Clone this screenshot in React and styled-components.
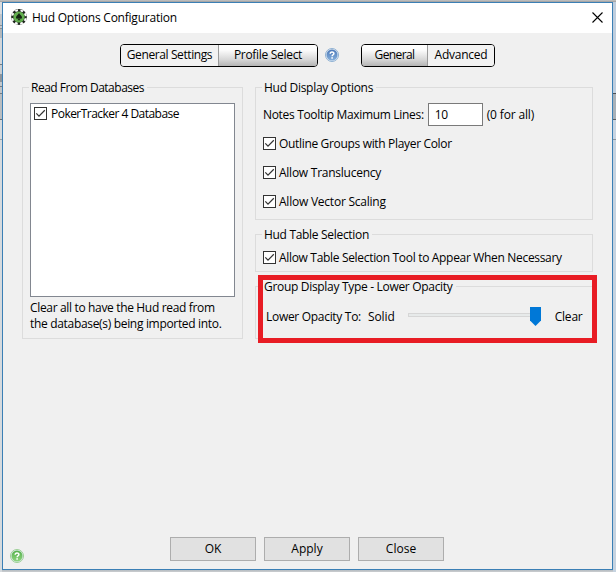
import React from 'react';
import styled, { createGlobalStyle } from 'styled-components';

const Global = createGlobalStyle`
  * { box-sizing: border-box; }
  body { margin: 0; overflow: hidden; color: #000; font: 12px/16px "Open Sans", "Noto Sans", sans-serif; }
`;

const Desktop = styled.div`
  width: 616px;
  height: 572px;
  display: grid;
  grid-template-columns: 2px 611px 3px;
  grid-template-rows: 2px 568px 2px;
  background: #c3c6c9;
`;
const Backdrop = styled.div`
  grid-row: ${p => p.$row};
  grid-column: ${p => p.$col};
  background: ${p => p.$fill};
`;
const Window = styled.div`
  grid-row: 2;
  grid-column: 2;
  display: flex;
  flex-direction: column;
  border: 1px solid #3b7fb5;
  background: #f0f0f0;
`;
const TitleBar = styled.div`
  height: 30px;
  display: flex;
  align-items: center;
  padding: 0 9px 2px 8px;
  background: #fff;
`;
const Title = styled.h1`
  flex: 1;
  margin: 2px 0 0 5px;
  font: inherit;
`;
const Label = styled.span`
  white-space: nowrap;
  letter-spacing: ${p => p.$ls || 0}px;
  margin-left: ${p => p.$gap || 0}px;
`;
const TabBar = styled.div`
  display: flex;
  align-items: center;
  height: 24px;
  margin: 10px 0 0 117px;
`;
const TabGroup = styled.div`
  display: flex;
  height: 23px;
  border: 1px solid #000;
  border-radius: 4px;
  overflow: hidden;
`;
const Tab = styled.button`
  width: ${p => p.$w}px;
  padding: 0;
  border: 0;
  border-left: ${p => (p.$divided ? '1px solid #9a9a9a' : '0')};
  font: inherit;
  color: inherit;
  background: ${p => (p.$active ? 'linear-gradient(#fff 0%, #fbfbfb 25%, #d6d6d6 70%, #b4b4b4 100%)' : '#f2f2f2')};
`;
const HelpSlot = styled.div`
  display: flex;
  margin: 0 22px 0 7px;
`;
const Columns = styled.div`
  display: flex;
  gap: 12px;
  margin: 20px 0 0 19px;
`;
const RightColumn = styled.div`
  width: 338px;
  display: flex;
  flex-direction: column;
`;
const Group = styled.section`
  width: ${p => p.$w}px;
  height: ${p => p.$h}px;
  margin-bottom: ${p => p.$after || 0}px;
  padding: 0 7px;
  border: 1px solid #dcdcdc;
`;
const Legend = styled.h2`
  width: fit-content;
  height: 16px;
  margin: -8px 0 0 -1px;
  padding: 0 3px 0 2px;
  background: #f0f0f0;
  font: inherit;
`;
const DatabaseList = styled.div`
  width: 205px;
  height: 194px;
  margin-top: 7px;
  padding: 1px 3px;
  border: 1px solid #828790;
  background: #fff;
`;
const Hint = styled.p`
  display: flex;
  flex-direction: column;
  margin: 3px 0 0;
`;
const Row = styled.div`
  display: flex;
  align-items: center;
  height: ${p => p.$h}px;
  margin-top: ${p => p.$top || 0}px;
`;
const CheckMark = styled.span`
  width: 13px;
  height: 13px;
  flex: none;
  display: flex;
  border: 1px solid #333;
  background: #fff;
`;
const NumberInput = styled.input`
  width: 55px;
  height: 23px;
  margin: 0 4px 0 4px;
  padding: 0 0 1px 6px;
  border: 1px solid #7a7a7a;
  border-radius: 0;
  background: #fff;
  font: inherit;
  color: inherit;
  letter-spacing: -0.4px;
`;
const Slider = styled.div`
  width: 133px;
  height: 19px;
  margin: 0 14px 0 13px;
  display: grid;
  align-items: center;
`;
const Track = styled.div`
  grid-area: 1 / 1;
  height: 4px;
  margin-bottom: 3px;
  border: 1px solid #d6d6d6;
  background: #e7eaea;
`;
const Thumb = styled.svg`
  grid-area: 1 / 1;
  justify-self: end;
  display: block;
`;
const HighlightHost = styled.div`
  position: relative;
`;
const Highlight = styled.div`
  position: absolute;
  left: 3px;
  top: -11px;
  width: 339px;
  height: 68px;
  border: 5px solid #e81c24;
  pointer-events: none;
`;
const Footer = styled.div`
  display: flex;
  align-items: flex-end;
  height: 26px;
  margin: auto 0 6px 7px;
`;
const Buttons = styled.div`
  display: flex;
  align-self: flex-start;
  gap: 8px;
  margin-left: 146px;
`;
const PushButton = styled.button`
  width: 86px;
  height: 24px;
  padding: 0 0 1px;
  border: 1px solid #adadad;
  background: #e1e1e1;
  font: inherit;
  color: inherit;
`;

const LEFT_FILL = `linear-gradient(#d9dcdf 0 12px, #c2c6ca 12px 23px, #8b9094 23px 24px, #c7cacd 24px 26px,
  #8b9094 26px 27px, #b4b8bb 27px 36px, #d3d6d9 36px 62px, #777c80 62px 63px, #c9cdd0 63px 72px, #8f959b 72px 80px, #c4c8cb 80px 84px,
  #777c80 84px 85px, #c0c4c8 85px 91px, #777c80 91px 92px, #b9bdc0 92px 117px, #6b6f73 117px 118px, #d5dade 118px 137px,
  #9aa0a5 137px 138px, #d5dade 138px 100%)`;
const RIGHT_FILL = `linear-gradient(#bfcede 0 91px, #4b5054 91px 92px, #a9b1b8 92px 117px, #5a5e61 117px 118px,
  #c9d5e2 118px 137px, #8b949c 137px 138px, #c6d3e0 138px 100%)`;

const ChipIcon = () => (
  <svg width="16" height="16" viewBox="0 0 16 16">
    <circle cx="8" cy="8" r="7.9" fill="#20261f" />
    <circle cx="8" cy="8" r="6.8" fill="none" stroke="#fff" strokeWidth="2" strokeDasharray="2.8 2.54" strokeDashoffset="-1.270" />
    <circle cx="8" cy="8" r="5.6" fill="#62ae4e" />
    <path d="M8 3.900C8.800 5.500 11 6.700 11 8.400c0 1.400-1.600 1.800-2.500.9.100 1 .4 1.500 1.100 1.900H6.400c.7-.4 1-.9 1.100-1.900-.9.900-2.500.5-2.500-.9C5 6.700 7.200 5.500 8 3.900z" fill="#142512" />
  </svg>
);

const CloseIcon = () => (
  <svg width="11" height="11" viewBox="0 0 11 11">
    <path d="M.5.5l10 10M10.500.5l-10 10" stroke="#000" strokeWidth="1.1" />
  </svg>
);

const HelpIcon = ({ id, dark, light, rim }) => (
  <svg width="14" height="14" viewBox="0 0 14 14">
    <defs>
      <linearGradient id={id} x1="0" y1="0" x2="0" y2="1">
        <stop offset="0" stopColor={dark} />
        <stop offset="1" stopColor={light} />
      </linearGradient>
    </defs>
    <circle cx="7" cy="7" r="6.500" fill="#e3ebf2" stroke={rim} strokeWidth="1" />
    <circle cx="7" cy="7" r="5.500" fill={`url(#${id})`} />
    <path d="M5.200 5.700C5.200 3.400 8.900 3.500 8.900 5.500 8.900 6.700 7.100 6.800 7.100 8.300" fill="none" stroke="#fff" strokeWidth="1.500" />
    <rect x="6.300" y="9.200" width="1.600" height="1.500" fill="#fff" />
  </svg>
);

const Check = () => (
  <CheckMark role="checkbox" aria-checked="true">
    <svg width="11" height="11" viewBox="0 0 11 11">
      <path d="M1.300 5.400l2.700 2.700L9.800 2.300" fill="none" stroke="#333" strokeWidth="1.250" />
    </svg>
  </CheckMark>
);

const Option = ({ top, ls, gap = 3, children }) => (
  <Row $h={17} $top={top}>
    <Check />
    <Label $ls={ls} $gap={gap}>{children}</Label>
  </Row>
);

export default function App() {
  return (
    <Desktop>
      <Global />
      <Backdrop $row="1" $col="1 / 4" $fill="linear-gradient(#c6c6c6, #9d9d9d)" />
      <Backdrop $row="2 / 4" $col="1" $fill={LEFT_FILL} />
      <Backdrop $row="2 / 4" $col="3" $fill={RIGHT_FILL} />
      <Backdrop $row="3" $col="2" $fill="linear-gradient(#b5bcc2, #cbcdcf)" />
      <Window>
        <TitleBar>
          <ChipIcon />
          <Title><Label $ls={-0.23}>Hud Options Configuration</Label></Title>
          <CloseIcon />
        </TitleBar>
        <TabBar>
          <TabGroup>
            <Tab $w={97}><Label $ls={-0.4}>General Settings</Label></Tab>
            <Tab $w={99} $active $divided><Label $ls={-0.3}>Profile Select</Label></Tab>
          </TabGroup>
          <HelpSlot><HelpIcon id="helpBlue" dark="#4b78b8" light="#86b0dc" rim="#8fb0d2" /></HelpSlot>
          <TabGroup>
            <Tab $w={65} $active><Label $ls={-0.6}>General</Label></Tab>
            <Tab $w={67} $divided><Label $ls={-0.24}>Advanced</Label></Tab>
          </TabGroup>
        </TabBar>
        <Columns>
          <Group $w={221} $h={252}>
            <Legend><Label $ls={-0.49}>Read From Databases</Label></Legend>
            <DatabaseList>
              <Option ls={-0.53} gap={4}>PokerTracker 4 Database</Option>
            </DatabaseList>
            <Hint>
              <Label $ls={-0.34}>Clear all to have the Hud read from</Label>
              <Label $ls={-0.32}>the database(s) being imported into.</Label>
            </Hint>
          </Group>
          <RightColumn>
            <Group $w={338} $h={133} $after={14}>
              <Legend><Label $ls={-0.29}>Hud Display Options</Label></Legend>
              <Row $h={23} $top={7}>
                <Label $ls={-0.32}>Notes Tooltip Maximum Lines:</Label>
                <NumberInput defaultValue="10" />
                <Label $ls={-0.15}>(0 for all)</Label>
              </Row>
              <Option top={9} ls={-0.33}>Outline Groups with Player Color</Option>
              <Option top={12} ls={-0.25}>Allow Translucency</Option>
              <Option top={12} ls={-0.23}>Allow Vector Scaling</Option>
            </Group>
            <Group $w={338} $h={38} $after={14}>
              <Legend><Label $ls={-0.31}>Hud Table Selection</Label></Legend>
              <Option top={6} ls={-0.32}>Allow Table Selection Tool to Appear When Necessary</Option>
            </Group>
            <HighlightHost>
              <Group $w={338} $h={53}>
                <Legend><Label $ls={-0.31}>Group Display Type - Lower Opacity</Label></Legend>
                <Row $h={19} $top={12}>
                  <Label $ls={-0.3} $gap={3}>Lower Opacity To:</Label>
                  <Label $ls={-0.1} $gap={7}>Solid</Label>
                  <Slider role="slider" aria-valuenow={100}>
                    <Track />
                    <Thumb width="11" height="19" viewBox="0 0 11 19">
                      <path d="M0 0h11v13.500L5.500 19 0 13.500z" fill="#0078d7" />
                    </Thumb>
                  </Slider>
                  <Label $ls={-0.2}>Clear</Label>
                </Row>
              </Group>
              <Highlight />
            </HighlightHost>
          </RightColumn>
        </Columns>
        <Footer>
          <HelpIcon id="helpGreen" dark="#55b04c" light="#8fd67f" rim="#9ccf94" />
          <Buttons>
            <PushButton>OK</PushButton>
            <PushButton>Apply</PushButton>
            <PushButton>Close</PushButton>
          </Buttons>
        </Footer>
      </Window>
    </Desktop>
  );
}
